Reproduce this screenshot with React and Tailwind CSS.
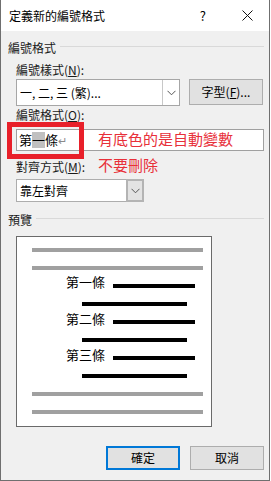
import React from "react";

const F = { fontFamily: '"Noto Sans CJK TC", "Noto Sans", sans-serif' };

function Chevron() {
  return (
    <svg width="9" height="6" viewBox="0 0 9 6" className="block">
      <path d="M0.5 0.8 L4.5 4.8 L8.5 0.8" fill="none" stroke="#555" strokeWidth="1" />
    </svg>
  );
}

function GroupHeader({ label, gap }) {
  return (
    <div className="flex items-center h-[14px] pl-[7px] pr-[5px]">
      <span className="text-[12px] leading-[14px] text-[#1a1a1a] shrink-0">{label}</span>
      <div className={`flex-1 h-px bg-[#d9d9d9] -translate-y-[2px] ${gap}`} />
    </div>
  );
}

function Label({ children }) {
  return <div className="h-[14px] pl-[15px] text-[12px] leading-[14px] text-[#1a1a1a]">{children}</div>;
}

function GrayLine({ mt }) {
  return <div className={`h-[4px] w-[171px] ml-[15px] bg-[#a0a0a0] ${mt}`} />;
}

function BlackLine({ mt }) {
  return <div className={`h-[4px] w-[105px] ml-[65px] bg-black ${mt}`} />;
}

function Row({ text, mt, lineMt }) {
  return (
    <div className={`flex items-start h-[16px] ml-[49px] ${mt}`}>
      <span className="text-[13px] leading-[16px] text-black w-[47px]">{text}</span>
      <div className={`h-[4px] w-[82px] bg-black ${lineMt}`} />
    </div>
  );
}

export default function App() {
  return (
    <div style={F} className="relative w-[270px] h-[481px] bg-[#f0f0f0] border-l border-r border-b border-[#6f6f6f] overflow-hidden">
      {/* title bar */}
      <div className="h-[31px] bg-white flex items-center pl-[8px]">
        <span className="text-[12px] leading-[14px] text-black">定義新的編號格式</span>
        <span className="ml-auto mr-[36px] text-[13px] leading-[14px] text-black">?</span>
        <svg width="11" height="11" viewBox="0 0 11 11" className="mr-[16px]">
          <path d="M0.5 0.5 L10.5 10.5 M10.5 0.5 L0.5 10.5" stroke="#111" strokeWidth="1" />
        </svg>
      </div>

      <div className="mt-[10px]">
        <GroupHeader label="編號格式" gap="ml-[4px]" />
      </div>

      <div className="mt-[8px]">
        <Label>
          編號樣式(<span className="underline">N</span>):
        </Label>
      </div>

      {/* combo + font button */}
      <div className="mt-[2px] flex h-[27px] pl-[15px]">
        <div className="w-[164px] h-[27px] bg-white border border-[#a6a6a6] flex">
          <div className="flex-1 flex items-center pl-[3px] text-[12px] leading-[14px] text-black">一, 二, 三 (繁)...</div>
          <div className="w-[17px] border-l border-[#c8c8c8] flex items-center justify-center">
            <Chevron />
          </div>
        </div>
        <div className="ml-[9px] w-[74px] h-[26px] bg-[#e1e1e1] border border-[#adadad] flex items-center justify-center text-[12px] leading-[14px] text-black">
          字型(<span className="underline">F</span>)...
        </div>
      </div>

      <div className="mt-[2px]">
        <Label>
          編號格式(<span className="underline">O</span>):
        </Label>
      </div>

      {/* format text field */}
      <div className="mt-[7px] pl-[15px] pr-[5px]">
        <div className="h-[22px] bg-white border border-[#a0a0a0] flex items-center pl-[2px] text-[13px] leading-[16px] text-black">
          <span>第</span>
          <span className="bg-[#c0c0c0]">一</span>
          <span>條</span>
          <span className="text-[#8a8a8a] text-[11px]">↵</span>
        </div>
      </div>

      <div className="mt-[9px]">
        <Label>
          對齊方式(<span className="underline">M</span>):
        </Label>
      </div>

      {/* align combo */}
      <div className="mt-[5px] pl-[15px]">
        <div className="w-[128px] h-[23px] bg-white border border-[#adadad] flex">
          <div className="flex-1 flex items-center pl-[3px] text-[12px] leading-[14px] text-black">靠左對齊</div>
          <div className="w-[18px] -my-px -mr-px border-2 border-[#b4b4b4] bg-[#e3e3e3] flex items-center justify-center">
            <Chevron />
          </div>
        </div>
      </div>

      <div className="mt-[11px]">
        <GroupHeader label="預覽" gap="ml-[4px]" />
      </div>

      {/* preview */}
      <div className="mt-[9px] ml-[15px] w-[196px] h-[191px] bg-white border border-[#6a6a6a]">
        <GrayLine mt="mt-[11px]" />
        <GrayLine mt="mt-[14px]" />
        <Row text="第一條" mt="mt-[4px]" lineMt="mt-[10px]" />
        <BlackLine mt="mt-[12px]" />
        <Row text="第二條" mt="mt-[5px]" lineMt="mt-[9px]" />
        <BlackLine mt="mt-[11px]" />
        <Row text="第三條" mt="mt-[5px]" lineMt="mt-[9px]" />
        <BlackLine mt="mt-[11px]" />
        <GrayLine mt="mt-[14px]" />
        <GrayLine mt="mt-[14px]" />
      </div>

      {/* buttons */}
      <div className="mt-[19px] flex justify-end pr-[5px] gap-[10px]">
        <div className="w-[74px] h-[24px] bg-[#e1e1e1] border-2 border-[#0078d7] flex items-center justify-center text-[12px] leading-[14px] text-black">確定</div>
        <div className="w-[74px] h-[24px] bg-[#e1e1e1] border border-[#adadad] flex items-center justify-center text-[12px] leading-[14px] text-black">取消</div>
      </div>

      {/* annotation overlays */}
      <div className="absolute left-[6px] top-[122px] w-[77px] h-[37px] border-[5px] border-[#e8202a]" />
      <div className="absolute left-[97px] top-[130px] text-[15px] leading-[18px] text-[#e8303a]">有底色的是自動變數</div>
      <div className="absolute left-[97px] top-[156px] text-[15px] leading-[18px] text-[#e8303a]">不要刪除</div>
    </div>
  );
}
